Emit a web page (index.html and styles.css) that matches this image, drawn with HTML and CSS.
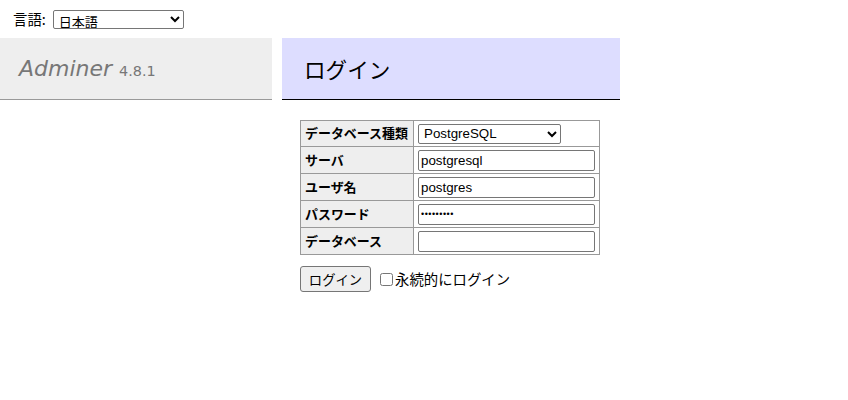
FILE: index.html
```html
<!DOCTYPE html>
<html lang="ja">
<head>
<meta charset="utf-8">
<title>ログイン - Adminer</title>
<link rel="stylesheet" href="styles.css">
</head>
<body>
<form class="lang">
  <label class="lang-label">言語: <select class="lang-select"><option>日本語</option></select></label>
</form>
<div class="layout">
  <div class="menu">
    <h1><a class="brand" href="#">Adminer</a> <span class="version">4.8.1</span></h1>
  </div>
  <div class="content">
    <h2>ログイン</h2>
    <form class="login">
      <table class="auth">
        <tr class="first"><th>データベース種類</th><td><select class="driver"><option>PostgreSQL</option></select></td></tr>
        <tr><th>サーバ</th><td><input class="field" type="text" value="postgresql"></td></tr>
        <tr><th>ユーザ名</th><td><input class="field" type="text" value="postgres"></td></tr>
        <tr><th>パスワード</th><td><input class="field pass" type="password" value="postgres1"></td></tr>
        <tr><th>データベース</th><td><input class="field" type="text" value=""></td></tr>
      </table>
      <p class="actions">
        <button class="submit" type="button">ログイン</button>
        <label class="perm"><input class="check" type="checkbox">永続的にログイン</label>
      </p>
    </form>
  </div>
</div>
</body>
</html>
```

FILE: styles.css
```css
html, body {
  margin: 0;
  padding: 0;
  background: #fff;
}
body {
  color: #000;
  font-family: "DejaVu Sans", "Noto Sans CJK JP", sans-serif;
  font-size: 14.4px;
  line-height: 1.25;
}
.lang {
  height: 38px;
  display: flex;
  align-items: center;
  padding: 0 0 0 13px;
  margin: 0;
  box-sizing: border-box;
}
.lang-label {
  display: flex;
  align-items: center;
  gap: 7px;
  font-family: "Noto Sans CJK JP", sans-serif;
  font-size: 14.4px;
}
.lang-select {
  width: 131px;
  height: 19px;
  font-family: "Noto Sans CJK JP", sans-serif;
  font-size: 13px;
  line-height: 15px;
  padding: 0 0 0 1px;
  border: 1px solid #767676;
  border-radius: 2px;
  background: #fff;
  color: #000;
}
.layout {
  display: flex;
  align-items: flex-start;
  gap: 10px;
}
.menu {
  width: 272px;
  flex: none;
}
h1 {
  margin: 0;
  height: 62px;
  box-sizing: border-box;
  padding: 0 0 0 19px;
  display: flex;
  align-items: center;
  gap: 7px;
  background: #eee;
  border-bottom: 1px solid #999;
  font-weight: normal;
  font-size: 21.6px;
  color: #777;
}
.brand {
  color: #777;
  text-decoration: none;
  font-style: italic;
  font-family: "DejaVu Sans", sans-serif;
  font-size: 22px;
}
.version {
  color: #777;
  font-size: 14.4px;
  font-family: "DejaVu Sans", sans-serif;
  padding-top: 4px;
}
.content {
  flex: none;
}
h2 {
  margin: 0 0 20px 0;
  height: 62px;
  box-sizing: border-box;
  padding: 0 0 0 22px;
  display: flex;
  align-items: center;
  background: #ddf;
  border-bottom: 1px solid #000;
  font-weight: normal;
  font-size: 21.6px;
  font-family: "Noto Sans CJK JP", sans-serif;
  width: 338px;
}
.login {
  margin: 0 0 0 18px;
}
.auth {
  border-collapse: collapse;
  font-size: 12.96px;
  font-family: "Noto Sans CJK JP", sans-serif;
}
.auth th, .auth td {
  border: 1px solid #999;
  padding: 2px 4px;
  height: 22px;
}
.auth .first th, .auth .first td {
  height: 21px;
}
.auth th {
  background: #eee;
  text-align: left;
  font-weight: bold;
  width: 104px;
  padding-left: 4px;
}
.auth td {
  width: 177px;
}
.driver {
  width: 143px;
  height: 20px;
  font-family: "Liberation Sans", Arial, sans-serif;
  font-size: 13.33px;
  border: 1px solid #767676;
  border-radius: 2px;
  background: #fff;
  color: #000;
  padding: 0 0 0 1px;
  display: block;
}
.field {
  width: 177px;
  height: 21px;
  box-sizing: border-box;
  font-family: "Liberation Sans", Arial, sans-serif;
  font-size: 13.33px;
  border: 1px solid #767676;
  border-radius: 2px;
  padding: 1px 2px;
  display: block;
}
.pass {
  font-size: 9px;
  letter-spacing: 0.5px;
}
.actions {
  margin: 11px 0 0 0;
  display: flex;
  align-items: center;
  gap: 9px;
}
.submit {
  width: 71px;
  height: 26px;
  font-family: "Noto Sans CJK JP", sans-serif;
  font-size: 13.33px;
  background: #efefef;
  border: 1px solid #767676;
  border-radius: 3px;
  color: #000;
  padding: 0;
}
.perm {
  display: flex;
  align-items: center;
  font-family: "Noto Sans CJK JP", sans-serif;
  font-size: 14.4px;
}
.check {
  width: 13px;
  height: 13px;
  margin: 0 2px 0 0;
}
```
